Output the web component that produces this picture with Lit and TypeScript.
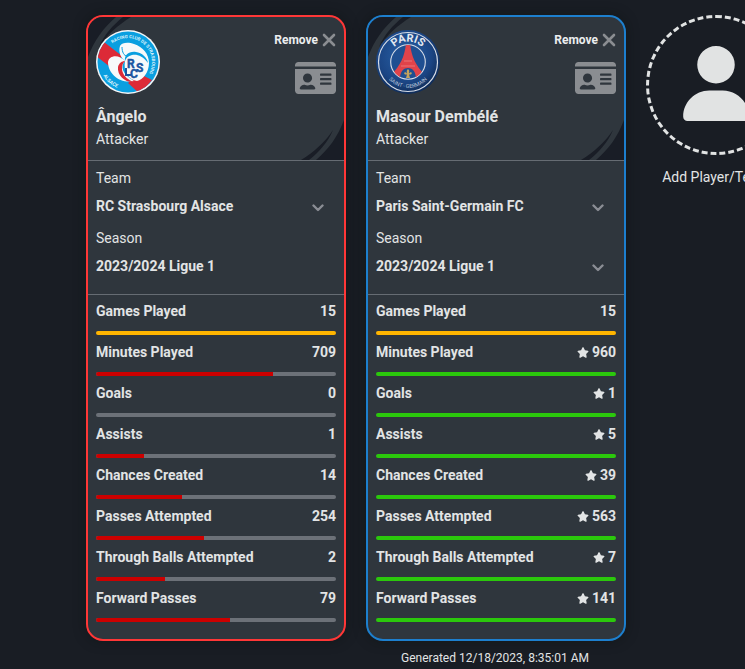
import { LitElement, html, css, nothing } from "lit";
import { customElement, property } from "lit/decorators.js";
import { classMap } from "lit/directives/class-map.js";

interface Stat {
  label: string;
  value: number;
  max: number;
  state: "even" | "best" | "behind";
}

interface Player {
  id: string;
  name: string;
  role: string;
  team: string;
  season: string;
  seasonChoice: boolean;
  color: "red" | "blue";
  stats: Stat[];
}

const LABELS = [
  "Games Played",
  "Minutes Played",
  "Goals",
  "Assists",
  "Chances Created",
  "Passes Attempted",
  "Through Balls Attempted",
  "Forward Passes",
];

const buildStats = (own: number[], other: number[]): Stat[] =>
  LABELS.map((label, i) => ({
    label,
    value: own[i],
    max: Math.max(own[i], other[i]),
    state: own[i] === other[i] ? "even" : own[i] > other[i] ? "best" : "behind",
  }));

const ANGELO = [15, 709, 0, 1, 14, 254, 2, 79];
const MASOUR = [15, 960, 1, 5, 39, 563, 7, 141];

const PLAYERS: Player[] = [
  {
    id: "angelo",
    name: "Ângelo",
    role: "Attacker",
    team: "RC Strasbourg Alsace",
    season: "2023/2024 Ligue 1",
    seasonChoice: false,
    color: "red",
    stats: buildStats(ANGELO, MASOUR),
  },
  {
    id: "masour",
    name: "Masour Dembélé",
    role: "Attacker",
    team: "Paris Saint-Germain FC",
    season: "2023/2024 Ligue 1",
    seasonChoice: true,
    color: "blue",
    stats: buildStats(MASOUR, ANGELO),
  },
];

const strasbourgCrest = html`
  <svg class="crest" viewBox="0 0 64 64" role="img" aria-label="RC Strasbourg Alsace crest">
    <defs>
      <clipPath id="disc"><circle cx="32" cy="32" r="30.5" /></clipPath>
      <path id="arc-top" d="M16.6 13.6 A24 24 0 1 1 41 54.3" />
      <path id="arc-bottom" d="M7.4 45.5 A28 28 0 0 0 40 58.8" />
    </defs>
    <circle cx="32" cy="32" r="32" fill="#f4f6f8" />
    <circle cx="32" cy="32" r="30.5" fill="#0a9fe0" />
    <g clip-path="url(#disc)">
      <path d="M8 12 L26 26 L18 40 L0 26 Z M44 44 L56 50 L44 64 L32 53 Z" fill="#dc2a37" />
    </g>
    <path d="M29 31 C25 28 22 22 24 16 C26 12 33 12 38 14 C47 17 53 24 53 33 C53 42 47 50 41 51 C33 50 27 42 29 31 Z" fill="#f7f9fa" />
    <path d="M12 32 C13 25 23 24 29 31 C24 36 26 44 38 51 C24 54 12 44 12 32 Z" fill="#f7f9fa" />
    <path d="M29 31 C23 37 26 48 38 52 C30 53 21 46 22 37 C23 33 26 31 29 31 Z" fill="#dc2a37" />
    <path d="M29 31 C28 25 33 21 40 22 C46 23 51 27 52 33 C47 26 41 24 36 25 C32 26 30 28 29 31 Z" fill="#0a9fe0" />
    <path d="M26 17 C26 22 28 26 31 26" fill="none" stroke="#0a9fe0" stroke-width="1" />
    <g fill="#1a55a0" stroke="#1a55a0" stroke-width="0.4" font-family="Roboto, sans-serif" font-weight="700">
      <text x="31" y="38" font-size="12">R</text>
      <text x="40" y="42" font-size="12">S</text>
      <text x="34" y="48" font-size="12">C</text>
    </g>
    <path d="M30 38 V45 H35" fill="none" stroke="#1a55a0" stroke-width="2" />
    <g fill="#d9f1fb" font-family="Roboto, sans-serif" font-weight="700">
      <text font-size="4.5"><textPath href="#arc-top">RACING CLUB DE STRASBOURG</textPath></text>
      <text font-size="5"><textPath href="#arc-bottom">ALSACE</textPath></text>
    </g>
  </svg>
`;

const parisCrest = html`
  <svg class="crest" viewBox="0 0 64 64" role="img" aria-label="Paris Saint-Germain crest">
    <defs>
      <radialGradient id="navy" cx="0.45" cy="0.4" r="0.6">
        <stop offset="0" stop-color="#2862a8" />
        <stop offset="0.7" stop-color="#1b4584" />
        <stop offset="1" stop-color="#102d59" />
      </radialGradient>
      <clipPath id="core"><circle cx="32" cy="32" r="17" /></clipPath>
      <path id="arc-paris" d="M12.6 26 A20.3 20.3 0 0 1 51.4 26" />
      <path id="arc-germain" d="M6 35 A26.2 26.2 0 0 0 58 35" />
    </defs>
    <circle cx="32" cy="32" r="32" fill="url(#navy)" />
    <circle cx="32" cy="32" r="29.5" fill="none" stroke="#d6dce6" stroke-width="1.2" />
    <circle cx="32" cy="32" r="17.3" fill="#1f4f91" stroke="#d6dce6" stroke-width="1.1" />
    <g clip-path="url(#core)">
      <path d="M30 13 H34 C35 25 39 35 49 45 L44 49 H40 C40 41 36 38 32 38 C28 38 24 41 24 49 H20 L15 45 C25 35 29 25 30 13 Z" fill="#e0434a" />
      <path d="M28 31 H36 M25 36 H39" stroke="#f08a8a" stroke-width="0.7" />
    </g>
    <path d="M32 39 C34 41 33 42 33 43.5 C35 41 37 43 35 44.5 H33 L34 48 H30 L31 44.5 H29 C27 43 29 41 31 43.5 C31 42 30 41 32 39 Z" fill="#c4a35c" />
    <g fill="#e3e8f0" font-family="Roboto, sans-serif">
      <text font-size="11" font-weight="700" text-anchor="middle"><textPath href="#arc-paris" startOffset="50%">PARIS</textPath></text>
      <text font-size="5.4" fill="#b9c6da" text-anchor="middle"><textPath href="#arc-germain" startOffset="50%">SAINT - GERMAIN</textPath></text>
    </g>
  </svg>
`;

const closeIcon = html`
  <svg class="close" viewBox="0 0 14 14" aria-hidden="true">
    <path d="M2 2 L12 12 M12 2 L2 12" fill="none" stroke="currentColor" stroke-width="2.6" stroke-linecap="round" />
  </svg>
`;

const idCardIcon = html`
  <svg class="id-card" viewBox="0 32 576 448" aria-hidden="true">
    <path
      fill="currentColor"
      d="M528 32H48C21.5 32 0 53.5 0 80v16h576V80c0-26.5-21.5-48-48-48zM0 432c0 26.5 21.5 48 48 48h480c26.5 0 48-21.5 48-48V128H0v304zm352-232c0-4.4 3.6-8 8-8h144c4.4 0 8 3.6 8 8v16c0 4.4-3.6 8-8 8H360c-4.4 0-8-3.6-8-8v-16zm0 64c0-4.4 3.6-8 8-8h144c4.4 0 8 3.6 8 8v16c0 4.4-3.6 8-8 8H360c-4.4 0-8-3.6-8-8v-16zm0 64c0-4.4 3.6-8 8-8h144c4.4 0 8 3.6 8 8v16c0 4.4-3.6 8-8 8H360c-4.4 0-8-3.6-8-8v-16zM176 192c35.3 0 64 28.7 64 64s-28.7 64-64 64-64-28.7-64-64 28.7-64 64-64zM67.1 396.2C75.5 370.5 99.6 352 128 352h8.2c12.3 5.1 25.7 8 39.8 8s27.6-2.9 39.8-8h8.2c28.4 0 52.5 18.5 60.9 44.2 3.2 9.9-5.2 19.8-15.6 19.8H82.7c-10.4 0-18.8-10-15.6-19.8z"
    />
  </svg>
`;

const chevronIcon = html`
  <svg class="chevron" viewBox="0 0 12 8" aria-hidden="true">
    <path d="M1.5 1.5 L6 6 L10.5 1.5" fill="none" stroke="currentColor" stroke-width="2.4" stroke-linecap="round" stroke-linejoin="round" />
  </svg>
`;

const starIcon = html`
  <svg class="star" viewBox="0 0 576 512" role="img" aria-label="Best">
    <path
      fill="currentColor"
      d="M316.9 18C311.6 7 300.4 0 288.1 0s-23.4 7-28.8 18L195 150.3 51.4 171.5c-12 1.8-22 10.2-25.7 21.7s-.7 24.2 7.9 32.7L137.8 329 113.2 474.7c-2 12 3 24.2 12.9 31.3s23 8 33.8 2.3l128.3-68.5 128.3 68.5c10.8 5.7 23.9 4.9 33.8-2.3s14.9-19.3 12.9-31.3L438.5 329 542.7 225.9c8.6-8.5 11.7-21.2 7.9-32.7s-13.7-19.9-25.7-21.7L381.2 150.3 316.9 18z"
    />
  </svg>
`;

const swoosh = html`
  <svg class="swoosh" viewBox="0 0 44 40" aria-hidden="true">
    <path d="M44 0 C38 16 29 29 16 40 H44 Z M33 10 C25 22 14 32 1 40 H9 C19 32 28 22 33 10 Z" fill="currentColor" />
  </svg>
`;

@customElement("player-card")
class PlayerCard extends LitElement {
  @property({ attribute: false }) player!: Player;

  static styles = css`
    :host {
      display: block;
      flex: none;
      width: 260px;
    }
    .card {
      box-sizing: border-box;
      border: 2px solid #ff3737;
      border-radius: 17px;
      background: #2f363d;
      overflow: hidden;
      box-shadow: 0 0 12px rgba(12, 18, 16, 0.5);
    }
    .card.blue {
      border-color: #1d7fce;
    }
    .head {
      position: relative;
      padding: 13px 8px 11px;
      border-bottom: 1px solid #666c73;
    }
    .corner {
      position: absolute;
      right: 0;
      bottom: 0;
      display: flex;
      color: #191d26;
    }
    .corner.top {
      inset: 0 auto auto 0;
      rotate: 180deg;
    }
    .swoosh {
      width: 44px;
      height: 40px;
    }
    .identity {
      position: relative;
      display: flex;
      justify-content: space-between;
      margin-bottom: 12px;
    }
    .crest {
      display: block;
      width: 64px;
      height: 64px;
    }
    .actions {
      display: flex;
      flex-direction: column;
      align-items: flex-end;
      justify-content: space-between;
    }
    button {
      display: flex;
      align-items: center;
      padding: 0;
      border: 0;
      background: none;
      color: #8a8d91;
      font: inherit;
      cursor: pointer;
    }
    .remove {
      gap: 4px;
      font-size: 12px;
      font-weight: 700;
      line-height: 20px;
    }
    .remove-text {
      color: #eceeef;
    }
    .close {
      width: 14px;
      height: 14px;
    }
    .id-card {
      width: 41px;
      height: 32px;
    }
    h2,
    p,
    dl,
    dd {
      margin: 0;
    }
    h2 {
      padding-bottom: 1px;
      font-size: 16px;
      line-height: 22px;
    }
    .fields {
      display: flex;
      flex-direction: column;
      gap: 8px;
      padding: 7px 8px 14px;
      border-bottom: 1px solid #666c73;
    }
    .field {
      display: flex;
      flex-direction: column;
      gap: 4px;
    }
    .pick {
      display: grid;
      align-items: center;
    }
    .pick > * {
      grid-area: 1 / 1;
    }
    select {
      appearance: none;
      width: 100%;
      height: 28px;
      padding: 0;
      border: 0;
      background: none;
      color: inherit;
      font: inherit;
      font-weight: 700;
      opacity: 1;
    }
    .chevron {
      justify-self: end;
      width: 12px;
      height: 8px;
      margin: 4px 12px 0 0;
      color: #8a8d94;
      pointer-events: none;
    }
    .stats {
      padding: 6px 8px 10px;
      font-weight: 700;
    }
    .stat {
      display: grid;
      grid-template-columns: 1fr auto;
      row-gap: 10px;
      padding-bottom: 7px;
    }
    .value {
      display: flex;
      align-items: center;
      gap: 3px;
    }
    .star {
      width: 12px;
      height: 11px;
    }
    .track {
      grid-column: 1 / -1;
      height: 4px;
      border-radius: 2px;
      background: #6c7178;
      overflow: hidden;
    }
    .fill {
      height: 100%;
      background: #cc0000;
    }
    .fill.even {
      background: #ffb500;
    }
    .fill.best {
      background: #2bc80c;
    }
  `;

  private renderField(label: string, value: string, choice: boolean) {
    const id = `${this.player.id}-${label.toLowerCase()}`;
    return html`
      <div class="field">
        <label for=${id}>${label}</label>
        <div class="pick">
          <select id=${id} ?disabled=${!choice}>
            <option>${value}</option>
          </select>
          ${choice ? chevronIcon : nothing}
        </div>
      </div>
    `;
  }

  private renderStat(stat: Stat) {
    const share = stat.max ? (stat.value / stat.max) * 100 : 0;
    return html`
      <div class="stat">
        <dt>${stat.label}</dt>
        <dd class="value">${stat.state === "best" ? starIcon : nothing}<span>${stat.value}</span></dd>
        <dd class="track" aria-hidden="true">
          <div class=${classMap({ fill: true, [stat.state]: true })} style="width: ${share}%"></div>
        </dd>
      </div>
    `;
  }

  render() {
    const p = this.player;
    return html`
      <article class=${classMap({ card: true, [p.color]: true })}>
        <header class="head">
          <div class="corner top">${swoosh}</div>
          <div class="corner">${swoosh}</div>
          <div class="identity">
            ${p.color === "red" ? strasbourgCrest : parisCrest}
            <div class="actions">
              <button class="remove"><span class="remove-text">Remove</span>${closeIcon}</button>
              <button aria-label="Player profile">${idCardIcon}</button>
            </div>
          </div>
          <h2>${p.name}</h2>
          <p>${p.role}</p>
        </header>
        <section class="fields">
          ${this.renderField("Team", p.team, true)}
          ${this.renderField("Season", p.season, p.seasonChoice)}
        </section>
        <dl class="stats">${p.stats.map((s) => this.renderStat(s))}</dl>
      </article>
    `;
  }
}

@customElement("app-root")
class AppRoot extends LitElement {
  static styles = css`
    :host {
      display: block;
      min-height: 100vh;
      overflow: hidden;
      background: #191d24;
      color: #e2e4e5;
      font: 14px/20px Roboto, "Liberation Sans", sans-serif;
    }
    .page {
      box-sizing: border-box;
      min-width: 990px;
      padding-top: 15px;
    }
    .board {
      display: flex;
      align-items: flex-start;
      gap: 20px;
      padding: 0 86px;
    }
    .add {
      display: flex;
      flex: none;
      flex-direction: column;
      align-items: center;
      gap: 12px;
      width: 140px;
      padding: 0;
      border: 0;
      background: none;
      color: inherit;
      font: inherit;
      cursor: pointer;
    }
    .ring {
      box-sizing: border-box;
      display: grid;
      place-items: center;
      width: 140px;
      height: 140px;
      padding-bottom: 4px;
      border: 3px dashed #e1e3e3;
      border-radius: 50%;
    }
    .user {
      width: 66px;
      height: 75px;
      color: #e1e3e3;
    }
    .generated {
      margin: 0;
      padding: 9px 0 3px;
      text-align: center;
      font-size: 12px;
      line-height: 16px;
    }
  `;

  render() {
    return html`
      <main class="page">
        <div class="board">
          ${PLAYERS.map((p) => html`<player-card .player=${p}></player-card>`)}
          <button class="add">
            <span class="ring">
              <svg class="user" viewBox="0 0 448 512" aria-hidden="true">
                <path
                  fill="currentColor"
                  d="M224 256A128 128 0 1 0 224 0a128 128 0 1 0 0 256zm-45.7 48C79.8 304 0 383.8 0 482.3C0 498.7 13.3 512 29.7 512H418.3c16.4 0 29.7-13.3 29.7-29.7C448 383.8 368.2 304 269.7 304H178.3z"
                />
              </svg>
            </span>
            <span>Add Player/Team</span>
          </button>
        </div>
        <p class="generated">Generated 12/18/2023, 8:35:01 AM</p>
      </main>
    `;
  }
}
